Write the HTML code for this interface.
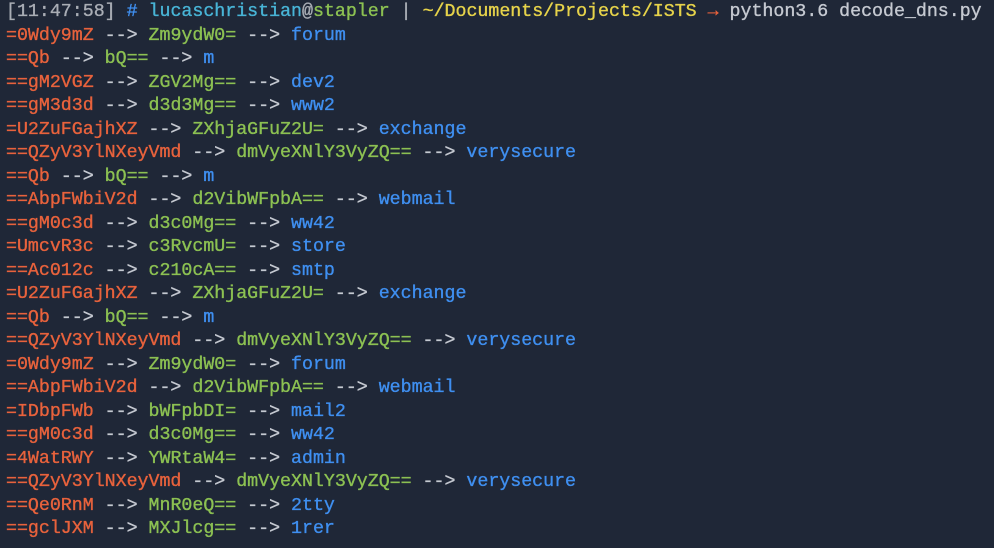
<html><body style="margin:0;background:#1f2737;width:994px;height:548px;overflow:hidden">
<style>
pre{margin:0;padding:1px 0 0 6px;font-family:"Liberation Mono",monospace;font-size:18.28px;line-height:23.5px;color:#c5c9d1;letter-spacing:0;-webkit-text-stroke:0.35px currentColor}
.r{color:#e8623c}.g{color:#8cc152}.b{color:#3f8ff0}.c{color:#48b4d6}.y{color:#e6d34a}.w{color:#a9adb5}
</style>
<pre><span class="w">[11:47:58]</span> <span class="b">#</span> <span class="c">lucaschristian</span><span class="w">@</span><span class="g">stapler</span> <span class="w">|</span> <span class="y">~/Documents/Projects/ISTS</span> <span class="r">→</span> python3.6 decode_dns.py
<span class="r">=0Wdy9mZ</span> --> <span class="g">Zm9ydW0=</span> --> <span class="b">forum</span>
<span class="r">==Qb</span> --> <span class="g">bQ==</span> --> <span class="b">m</span>
<span class="r">==gM2VGZ</span> --> <span class="g">ZGV2Mg==</span> --> <span class="b">dev2</span>
<span class="r">==gM3d3d</span> --> <span class="g">d3d3Mg==</span> --> <span class="b">www2</span>
<span class="r">=U2ZuFGajhXZ</span> --> <span class="g">ZXhjaGFuZ2U=</span> --> <span class="b">exchange</span>
<span class="r">==QZyV3YlNXeyVmd</span> --> <span class="g">dmVyeXNlY3VyZQ==</span> --> <span class="b">verysecure</span>
<span class="r">==Qb</span> --> <span class="g">bQ==</span> --> <span class="b">m</span>
<span class="r">==AbpFWbiV2d</span> --> <span class="g">d2VibWFpbA==</span> --> <span class="b">webmail</span>
<span class="r">==gM0c3d</span> --> <span class="g">d3c0Mg==</span> --> <span class="b">ww42</span>
<span class="r">=UmcvR3c</span> --> <span class="g">c3RvcmU=</span> --> <span class="b">store</span>
<span class="r">==Ac012c</span> --> <span class="g">c210cA==</span> --> <span class="b">smtp</span>
<span class="r">=U2ZuFGajhXZ</span> --> <span class="g">ZXhjaGFuZ2U=</span> --> <span class="b">exchange</span>
<span class="r">==Qb</span> --> <span class="g">bQ==</span> --> <span class="b">m</span>
<span class="r">==QZyV3YlNXeyVmd</span> --> <span class="g">dmVyeXNlY3VyZQ==</span> --> <span class="b">verysecure</span>
<span class="r">=0Wdy9mZ</span> --> <span class="g">Zm9ydW0=</span> --> <span class="b">forum</span>
<span class="r">==AbpFWbiV2d</span> --> <span class="g">d2VibWFpbA==</span> --> <span class="b">webmail</span>
<span class="r">=IDbpFWb</span> --> <span class="g">bWFpbDI=</span> --> <span class="b">mail2</span>
<span class="r">==gM0c3d</span> --> <span class="g">d3c0Mg==</span> --> <span class="b">ww42</span>
<span class="r">=4WatRWY</span> --> <span class="g">YWRtaW4=</span> --> <span class="b">admin</span>
<span class="r">==QZyV3YlNXeyVmd</span> --> <span class="g">dmVyeXNlY3VyZQ==</span> --> <span class="b">verysecure</span>
<span class="r">==Qe0RnM</span> --> <span class="g">MnR0eQ==</span> --> <span class="b">2tty</span>
<span class="r">==gclJXM</span> --> <span class="g">MXJlcg==</span> --> <span class="b">1rer</span></pre>
</body></html>
